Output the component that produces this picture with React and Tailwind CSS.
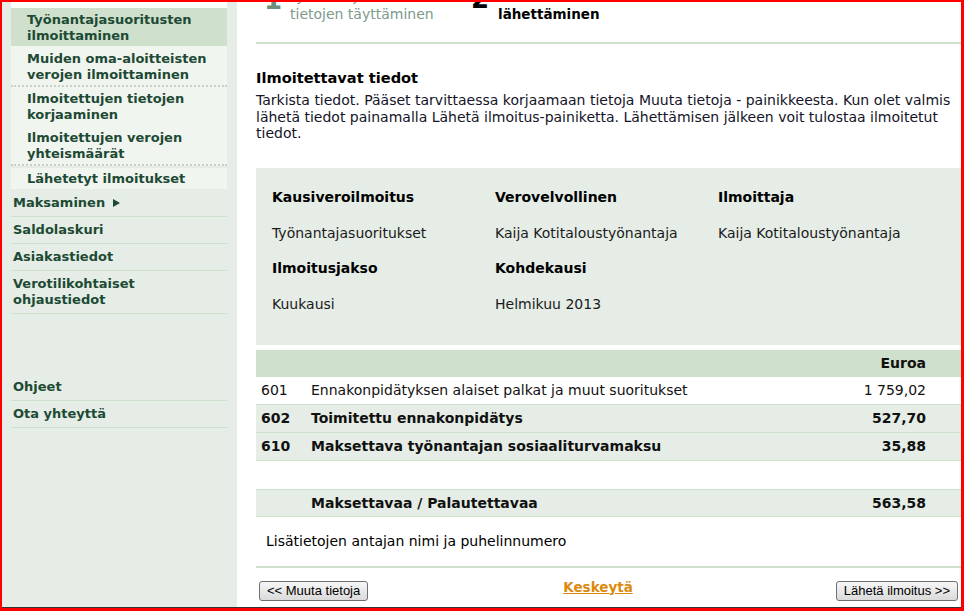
const subItems = [
  { label: ['Työnantajasuoritusten', 'ilmoittaminen'], cls: 'bg-[#cfe0cc] pt-[4px] pb-[2px]' },
  { label: ['Muiden oma-aloitteisten', 'verojen ilmoittaminen'], cls: 'bg-[#f1f5f0] pt-[5px] pb-[2px]', sep: true },
  { label: ['Ilmoitettujen tietojen', 'korjaaminen'], cls: 'bg-[#f1f5f0] pt-[4px] pb-[2px]' },
  { label: ['Ilmoitettujen verojen', 'yhteismäärät'], cls: 'bg-[#f1f5f0] pt-[5px] pb-[2px]', sep: true },
];

const mainItems = [
  { label: ['Maksaminen'], arrow: true },
  { label: ['Saldolaskuri'] },
  { label: ['Asiakastiedot'] },
  { label: ['Verotilikohtaiset', 'ohjaustiedot'] },
];

const rows = [
  { code: '601', text: 'Ennakonpidätyksen alaiset palkat ja muut suoritukset', sum: '1 759,02', bold: false, bg: 'bg-white' },
  { code: '602', text: 'Toimitettu ennakonpidätys', sum: '527,70', bold: true, bg: 'bg-[#e5ede6]' },
  { code: '610', text: 'Maksettava työnantajan sosiaaliturvamaksu', sum: '35,88', bold: true, bg: 'bg-[#e5ede6]' },
];

function Sidebar() {
  return (
    <aside className="w-[235px] shrink-0 bg-[#e5ede6] pl-[9px] pr-[10px] text-[13px] font-bold leading-[16px] text-[#1d4a34]">
      <div className="h-[6px] bg-white" />
      {subItems.map((it, i) => (
        <div key={i}>
          <div className={`pl-[16px] ${it.cls}`}>
            {it.label.map((l) => (
              <div key={l}>{l}</div>
            ))}
          </div>
          {it.sep && <div className="h-[2px] border-b-2 border-dotted border-[#c6d2c6] bg-[#f1f5f0]" />}
        </div>
      ))}
      <div className="mt-[2px] bg-[#f1f5f0] pl-[16px] pt-[3px] pb-[2px]">Lähetetyt ilmoitukset</div>

      {mainItems.map((it, i) => (
        <div key={i} className={`border-b border-[#cfe0cc] pl-[2px] py-[5px] ${i === 0 ? 'mt-[1px]' : ''}`}>
          {it.label.map((l, j) => (
            <div key={l} className="flex items-center">
              {l}
              {it.arrow && j === 0 && (
                <svg className="ml-[8px]" width="7" height="8" viewBox="0 0 7 8">
                  <path d="M0 0 L7 4 L0 8 Z" fill="#1d4a34" />
                </svg>
              )}
            </div>
          ))}
        </div>
      ))}

      <div className="mt-[60px] border-b border-[#cfe0cc] pl-[2px] py-[5px]">Ohjeet</div>
      <div className="border-b border-[#cfe0cc] pl-[2px] py-[5px]">Ota yhteyttä</div>
    </aside>
  );
}

function Steps() {
  return (
    <div className="h-[40px] overflow-hidden">
      <div className="flex -mt-[15px] pl-[8px] text-[14px] leading-[18px]">
        <div className="flex w-[207px]">
          <span className="w-[26px] text-[26px] font-bold leading-none text-[#6a907c]">1</span>
          <div className="text-[#7d9a8b]">
            <div>Työnantajasuoritusten</div>
            <div>tietojen täyttäminen</div>
          </div>
        </div>
        <div className="flex">
          <span className="w-[27px] -mt-[1px] text-[26px] font-bold leading-none text-black">2</span>
          <div className="text-[13.5px] font-bold text-black">
            <div>Ilmoituksen</div>
            <div>lähettäminen</div>
          </div>
        </div>
      </div>
    </div>
  );
}

function InfoPanel() {
  const cell = (label, value) => (
    <div className="w-[223px]">
      <div className="h-[16px] font-bold text-black">{label}</div>
      <div className="mt-[20px] h-[16px] text-[#1a1a1a]">{value}</div>
    </div>
  );
  return (
    <div className="mt-[26px] h-[177px] bg-[#e5ede6] pl-[16px] pt-[21px] text-[14px] leading-[16px]">
      <div className="flex">
        {cell('Kausiveroilmoitus', 'Työnantajasuoritukset')}
        {cell('Verovelvollinen', 'Kaija Kotitaloustyönantaja')}
        {cell('Ilmoittaja', 'Kaija Kotitaloustyönantaja')}
      </div>
      <div className="mt-[19px] flex">
        {cell('Ilmoitusjakso', 'Kuukausi')}
        {cell('Kohdekausi', 'Helmikuu 2013')}
      </div>
    </div>
  );
}

function Table() {
  return (
    <div className="mt-[5px] text-[14px] leading-[16px] text-[#111]">
      <div className="flex h-[27px] items-center bg-[#cfe0cc] pr-[35px]">
        <span className="ml-auto font-bold">Euroa</span>
      </div>
      {rows.map((r) => (
        <div
          key={r.code}
          className={`flex h-[28px] items-center border-b border-[#cfe0cc] ${r.bg} pr-[35px] ${r.bold ? 'font-bold' : ''}`}
        >
          <span className="w-[55px] pl-[5px]">{r.code}</span>
          <span className="flex-1">{r.text}</span>
          <span>{r.sum}</span>
        </div>
      ))}
      <div className="h-[28px]" />
      <div className="flex h-[28px] items-center border-y border-[#cfe0cc] bg-[#e5ede6] pr-[35px] font-bold">
        <span className="w-[55px]" />
        <span className="flex-1">Maksettavaa / Palautettavaa</span>
        <span>563,58</span>
      </div>
    </div>
  );
}

function Button({ children, className = '' }) {
  return (
    <button
      className={`h-[20px] rounded-[3px] border border-[#707070] bg-gradient-to-b from-[#f7f7f7] to-[#dadada] px-[7px] font-['Liberation_Sans',Arial,sans-serif] text-[13px] leading-[18px] text-black ${className}`}
    >
      {children}
    </button>
  );
}

export default function App() {
  return (
    <div className="h-[611px] w-[964px] overflow-hidden border-t-2 border-l-2 border-r-[3px] border-b-[3px] border-[#ff0000] bg-white font-['DejaVu_Sans',Verdana,sans-serif]">
      <div className="flex h-full border-b border-[#333]">
        <Sidebar />
        <main className="flex-1 overflow-hidden pl-[19px]">
          <Steps />
          <div className="h-[2px] bg-[#cfe0cc]" />
          <h1 className="mt-[25px] text-[14.6px] font-bold leading-[18px] text-black">Ilmoitettavat tiedot</h1>
          <p className="mt-[5px] pr-[4px] text-[14px] leading-[16.5px] text-[#141428]">
            Tarkista tiedot. Pääset tarvittaessa korjaamaan tietoja Muuta tietoja - painikkeesta. Kun olet valmis
            lähetä tiedot painamalla Lähetä ilmoitus-painiketta. Lähettämisen jälkeen voit tulostaa ilmoitetut
            tiedot.
          </p>
          <InfoPanel />
          <Table />
          <div className="mt-[16px] pl-[10px] text-[14px] leading-[16px] text-black">
            Lisätietojen antajan nimi ja puhelinnumero
          </div>
          <div className="mt-[17px] h-[2px] bg-[#cfe0cc]" />
          <div className="mt-[13px] flex items-start px-[3px]">
            <Button>&lt;&lt; Muuta tietoja</Button>
            <a href="#" className="ml-[195px] mt-[-2px] text-[13.5px] font-bold leading-[16px] text-[#dc8a0e] underline">
              Keskeytä
            </a>
            <Button className="ml-auto">Lähetä ilmoitus &gt;&gt;</Button>
          </div>
        </main>
      </div>
    </div>
  );
}
